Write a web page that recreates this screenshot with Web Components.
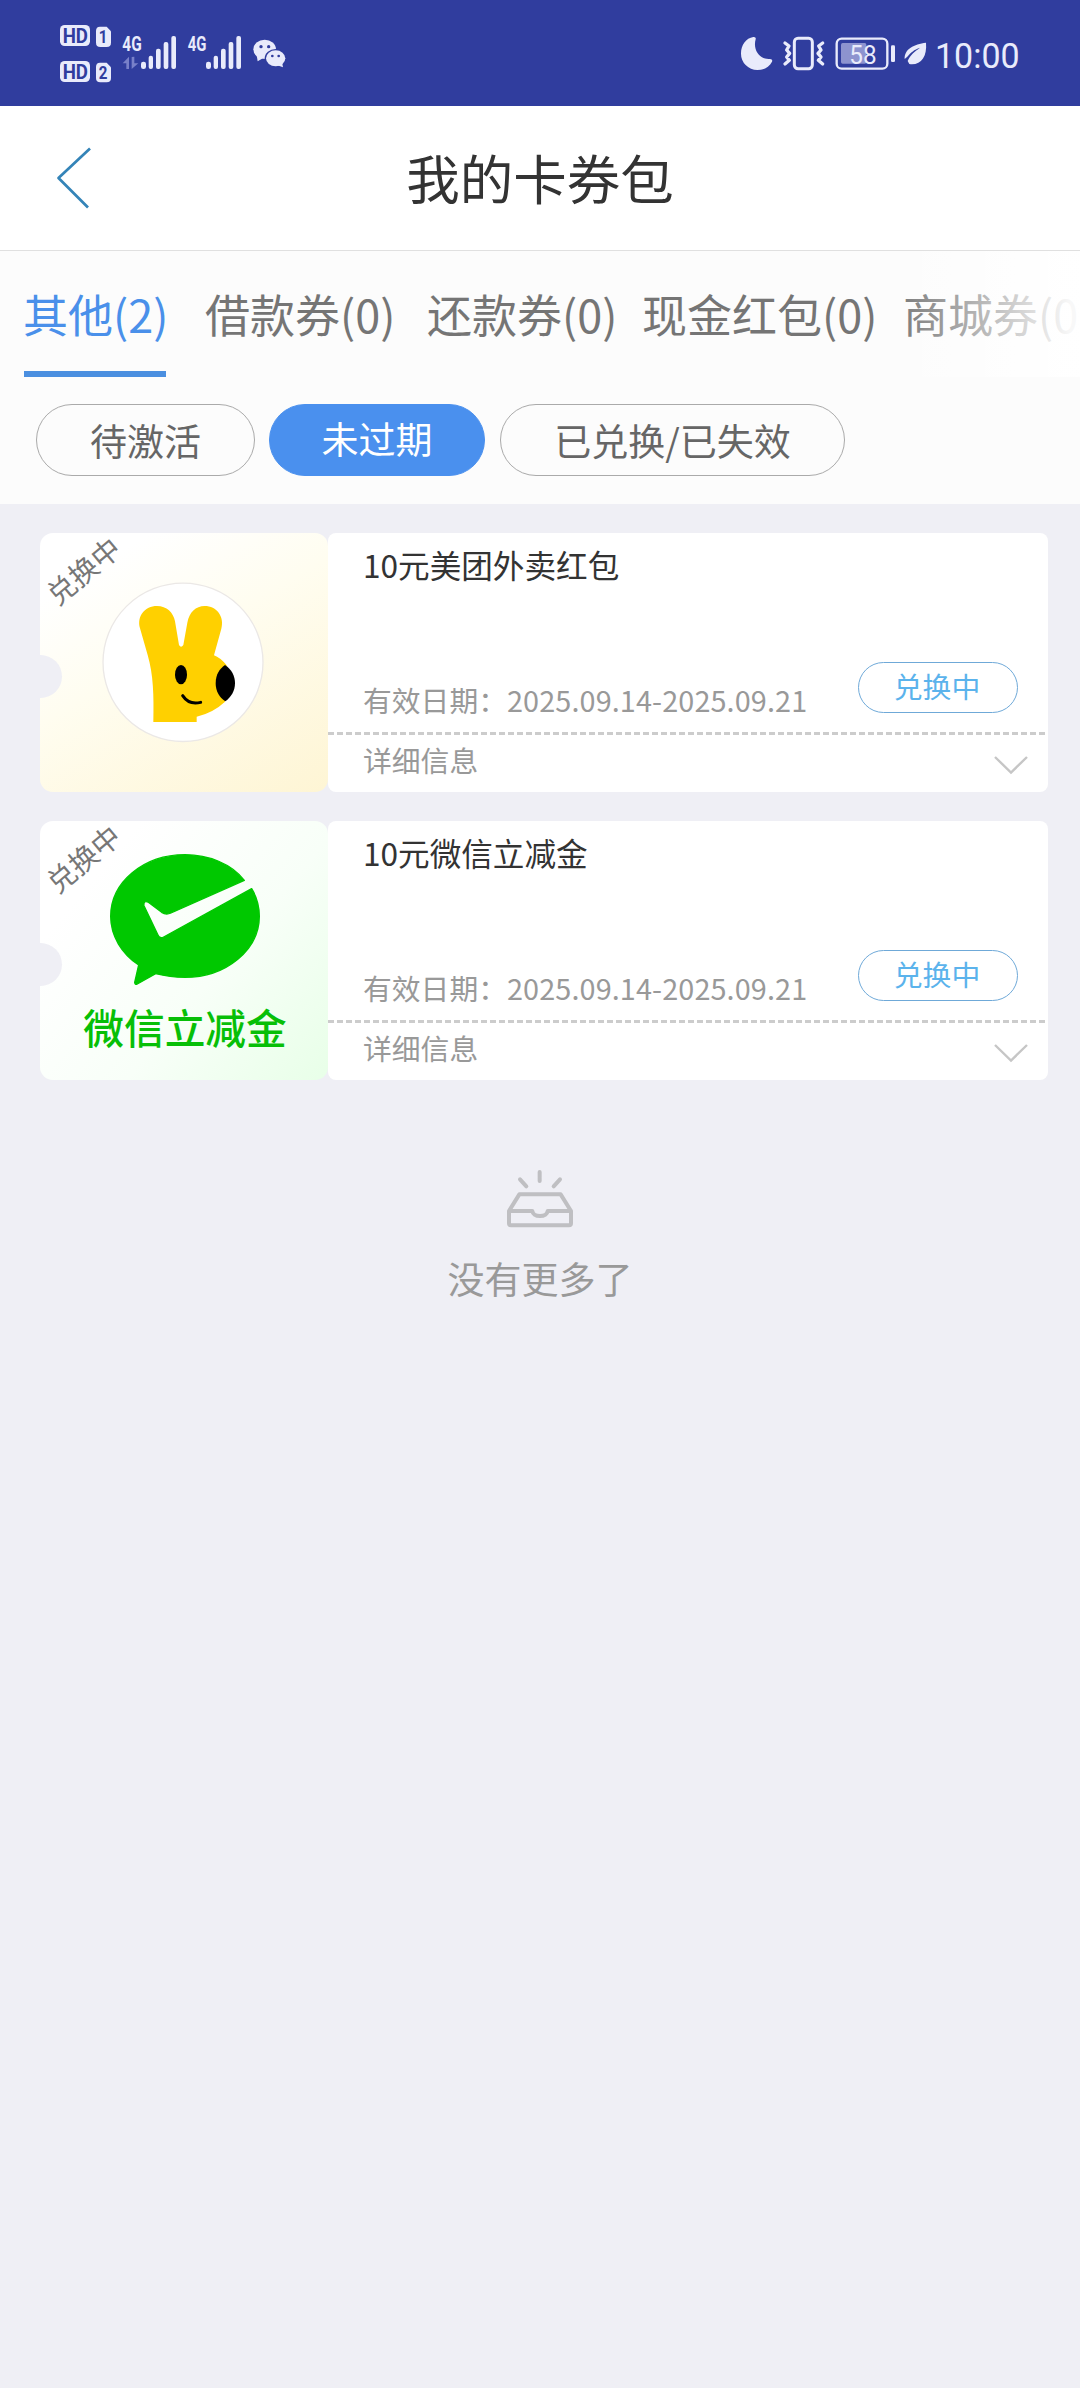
<!DOCTYPE html>
<html lang="zh-CN">
<head>
<meta charset="utf-8">
<title>我的卡券包</title>
<style>
html,body{margin:0;padding:0}
body{width:1080px;height:2388px;background:#efeff5;overflow:hidden;font-family:"Noto Sans CJK SC",sans-serif}
</style>
</head>
<body>
<wallet-page></wallet-page>
<script>
function define(name, html, setup){
  const template = document.createElement('template');
  template.innerHTML = html;
  customElements.define(name, class extends HTMLElement{
    constructor(){
      super();
      this.attachShadow({mode:'open'}).appendChild(template.content.cloneNode(true));
    }
    connectedCallback(){ if(setup) setup(this, this.shadowRoot); }
  });
}

define('status-bar', `
<style>:host{display:block;height:106px;background:#303d9e}svg{display:block}text{font-family:Roboto,sans-serif}</style>
<svg width="1080" height="106" viewBox="0 0 3240 318" fill="#e9ebfb">
  <g transform="translate(120 0)">
    <rect x="60" y="75" width="90" height="63" rx="14"/>
    <path d="M180 80h20l13 14v34q0 13-13 13h-19q-13 0-13-13V93q0-13 12-13z"/>
    <rect x="60" y="183" width="90" height="63" rx="14"/>
    <path d="M180 188h20l13 14v32q0 13-13 13h-19q-13 0-13-13v-33q0-13 12-13z"/>
    <g fill="#303d9e" font-weight="700">
      <text x="68" y="128" font-size="60" textLength="76" lengthAdjust="spacingAndGlyphs">HD</text>
      <text x="68" y="236" font-size="60" textLength="76" lengthAdjust="spacingAndGlyphs">HD</text>
      <text x="176" y="130" font-size="54" textLength="26" lengthAdjust="spacingAndGlyphs">1</text>
      <text x="176" y="238" font-size="54" textLength="26" lengthAdjust="spacingAndGlyphs">2</text>
    </g>
    <g font-weight="700" font-size="61">
      <text x="247" y="152" textLength="58" lengthAdjust="spacingAndGlyphs">4G</text>
      <text x="443" y="152" textLength="56" lengthAdjust="spacingAndGlyphs">4G</text>
    </g>
    <path fill="#7880c9" d="M248 190l19-20v37h-8v-17zM275 207v-36l8-1v20h12z"/>
    <g>
      <rect x="303" y="185" width="15" height="22" rx="7"/><rect x="326" y="167" width="13" height="40" rx="6"/><rect x="348" y="146" width="14" height="61" rx="6"/><rect x="371" y="126" width="14" height="81" rx="6"/><rect x="394" y="108" width="14" height="99" rx="6"/>
    </g>
    <g transform="translate(195 0)">
      <rect x="303" y="185" width="15" height="22" rx="7"/><rect x="326" y="167" width="13" height="40" rx="6"/><rect x="348" y="146" width="14" height="61" rx="6"/><rect x="371" y="126" width="14" height="81" rx="6"/><rect x="394" y="108" width="14" height="99" rx="6"/>
    </g>
    <ellipse cx="674" cy="148" rx="34" ry="29"/><path d="M650 166l3 18 17-10z"/>
    <ellipse cx="707" cy="175" rx="33" ry="28" fill="#303d9e"/>
    <ellipse cx="707" cy="175" rx="29" ry="24"/><path d="M712 196l17 6-3-16z"/>
    <g fill="#303d9e"><circle cx="663" cy="140" r="5"/><circle cx="686" cy="140" r="5"/><circle cx="697" cy="168" r="4"/><circle cx="716" cy="168" r="4"/></g>
  </g>
  <g transform="translate(2160 0)">
    <path d="M100 111q9-1 7 7c-9 31 11 62 43 59q9 0 6 8c-8 17-25 25-44 25a49 49 0 0 1-49-50c0-25 15-46 37-49z"/>
    <rect x="223" y="115" width="54" height="91" rx="11" fill="none" stroke="#e9ebfb" stroke-width="9"/>
    <path d="M195 129l12 9-7 12 9 10-9 11 8 10-13 11M308 129l-12 9 7 12-9 10 9 11-8 10 13 11" fill="none" stroke="#e9ebfb" stroke-width="10" stroke-linejoin="round" stroke-linecap="round"/>
    <rect x="350" y="116" width="152" height="90" rx="15" fill="none" stroke="#e9ebfb" stroke-width="7"/>
    <rect x="363" y="129" width="76" height="62" rx="5" fill="#8d93cf"/>
    <rect x="513" y="136" width="12" height="50" rx="4"/>
    <text x="388" y="192" font-size="80" textLength="82" lengthAdjust="spacingAndGlyphs">58</text>
    <path d="M618 128c-36 5-65 18-64 49l8-7c11-13 20-21 38-27-15 11-30 22-37 40l5 9c33 5 54-20 50-64z"/>
    <text x="645" y="203" font-size="107" textLength="254" lengthAdjust="spacingAndGlyphs">10:00</text>
  </g>
</svg>`);

define('nav-header', `
<style>
:host{display:grid;grid-template-columns:140px 1fr 140px;height:144px;background:#fff;border-bottom:1px solid #e0e0e0}
h1{margin:0;text-align:center;font-size:53.5px;font-weight:400;line-height:142px;color:#333}
</style>
<svg width="140" height="144" fill="none" stroke="#3484b8" stroke-width="2.7" stroke-linejoin="round"><path d="M90 42.5L58.5 72 88 101.5"/></svg>
<h1><slot></slot></h1>`);

define('tab-item', `
<style>
:host{display:block;flex:none;box-sizing:border-box;height:126px;font-size:45px;line-height:125px;color:#757575;white-space:nowrap;border-bottom:6px solid transparent}
:host([active]){color:#4a90ea;border-bottom-color:#4b8fe0}
.text{margin-left:-1px}
</style><span class="text"><slot></slot><span class="n"></span></span>`, (el, root) => {
  root.querySelector('.n').textContent = '(' + el.getAttribute('count') + ')';
});

define('tab-bar', `
<style>
:host{display:flex;position:relative;height:126px;overflow:hidden}
.fade{position:absolute;right:0;top:0;width:190px;height:126px;background:linear-gradient(90deg,rgba(255,255,255,0),rgba(255,255,255,.95) 95%)}
</style><slot></slot><div class="fade"></div>`);

define('filter-chip', `
<style>
:host{display:block;box-sizing:border-box;height:72px;border:1px solid #aaa;border-radius:36px;font-size:37px;line-height:70px;text-align:center;color:#666;white-space:nowrap}
:host([active]){background:#4a90ee;border-color:#4a90ee;color:#fff;line-height:66px}
</style><slot></slot>`);

define('coupon-card', `
<style>
:host{display:flex;height:259px}
.art{position:relative;width:288px;height:259px;border-radius:13px;background:var(--art)}
.notch{position:absolute;left:0;top:122px;width:22px;height:43px;border-radius:0 22px 22px 0;background:#efeff5}
.state{position:absolute;left:0;top:18px;width:86px;line-height:38px;font-size:28.5px;color:#777;transform:rotate(-40deg);white-space:nowrap}
.info{display:flex;flex-direction:column;width:720px;background:#fff;border-radius:8px;overflow:hidden}
.main{display:flex;justify-content:space-between;height:199px;box-sizing:border-box;padding:0 30px 0 35px}
.copy{display:flex;flex-direction:column;justify-content:space-between}
h2{margin:9px 0 0;font-size:31.6px;line-height:44px;font-weight:400;color:#333}
.date{margin-bottom:11px;font-size:28.8px;line-height:42px;color:#999;white-space:nowrap}
.date span{letter-spacing:.12px}
button{align-self:flex-end;box-sizing:border-box;width:160px;height:51px;margin:0 0 19px;padding:0 2px 3px 0;border:1px solid #6fa9d8;border-radius:26px;background:none;font:28.8px/44px "Noto Sans CJK SC",sans-serif;color:#5bb3ec}
.line{height:3px;background:repeating-linear-gradient(90deg,#ccc 0 6px,transparent 6px 9px)}
.more{display:flex;justify-content:space-between;padding:0 20px 0 35px;height:57px;font-size:28.8px;line-height:50px;color:#999}
.more svg{margin-top:19px}
</style>
<div class="art"><slot name="art"></slot><div class="notch"></div><div class="state">兑换中</div></div>
<div class="info">
  <div class="main"><div class="copy"><h2><slot></slot></h2><div class="date">有效日期：<span></span></div></div><button>兑换中</button></div>
  <div class="line"></div>
  <div class="more"><span>详细信息</span><svg width="34" height="22" fill="none" stroke="#c6c6c6" stroke-width="2.4"><path d="M1 3l16 15.500L33 3"/></svg></div>
</div>`, (el, root) => {
  root.querySelector('.date span').textContent = el.getAttribute('dates');
});

define('kangaroo-art', `
<style>:host{display:block}svg{display:block}</style>
<svg width="288" height="259" viewBox="30 39 864 777">
  <ellipse cx="459" cy="427" rx="240" ry="237.500" fill="#fff" stroke="#ebe8e6" stroke-width="4"/>
  <path fill="#ffd000" d="M370 606C372 525 370 465 353 405L330 325C320 289 344 258 381 258C410 258 430 277 435 304L447 375Q453 386 460 375L472 308C478 277 497 258 524 258C560 258 584 290 574 326L552 406Q570 412 590 436L585 545Q550 578 500 590V606Z"/>
  <path d="M585 435C605 449 615 467 615 490C615 513 603 532 586 544C568 532 557 514 557 489C557 464 569 446 585 435Z"/>
  <ellipse cx="453" cy="464" rx="18" ry="29"/>
  <path d="M458 527Q477 556 512 547" fill="none" stroke="#000" stroke-width="9" stroke-linecap="round"/>
</svg>`);

define('wechat-art', `
<style>
:host{display:flex;flex-direction:column;align-items:center;height:259px}
svg{display:block}
p{margin:0 0 0 2px;font-size:40.7px;line-height:59px;font-weight:500;color:#07bf07}
</style>
<svg width="288" height="176" viewBox="30 32 864 528">
  <path fill="#00c800" stroke="#00c800" stroke-width="4" stroke-linejoin="round" d="M643 210C605 160 535 133 465 133C340 133 242 216 242 318C242 377 275 430 326 464L314 516Q315 525 322 521L377 490Q420 501 465 501C588 501 688 419 688 318Q688 272 665 235L401 380Q390 386 384 374L342 286Q340 270 354 275L395 306Q408 315 423 308Z"/>
</svg>
<p>微信立减金</p>`);

define('empty-state', `
<style>
:host{display:flex;flex-direction:column;align-items:center;font-size:37px;line-height:54px;color:#999}
svg{display:block;margin-bottom:19px}
</style>
<svg width="70" height="64" viewBox="225 55 210 192" fill="none" stroke="#bfbfc2" stroke-width="12" stroke-linecap="round" stroke-linejoin="round">
  <path d="M329 67v27M270 89l19 21M390 89l-19 21"/>
  <path d="M237 184L268 134H392L423 184V221Q423 227 417 227H243Q237 227 237 221ZM237 184H307C308 192 316 199 330 199C344 199 352 192 353 184H423"/>
</svg><slot></slot>`);

define('wallet-page', `
<style>
:host{display:flex;flex-direction:column;width:1080px;height:2388px}
.panel{background:#fcfcfc;height:253px}
tab-item:nth-child(1){margin-left:24px;width:142px;margin-right:40px}
tab-item:nth-child(2){width:187px;margin-right:35px}
tab-item:nth-child(3){width:187px;margin-right:28px}
tab-item:nth-child(4){width:232px;margin-right:29px}
.chips{display:flex;padding:27px 0 0 36px}
.chips :nth-child(1){width:219px;margin-right:14px}
.chips :nth-child(2){width:216px;margin-right:15px}
.chips :nth-child(3){width:345px}
.list{display:flex;flex-direction:column;gap:29px;padding:29px 32px 0 40px}
.y{--art:linear-gradient(150deg,#fff 15%,#fffdf0 45%,#fef5d4 100%)}
.g{--art:linear-gradient(130deg,#fff 20%,#f8fff8 60%,#e8ffe8 100%)}
empty-state{margin-top:88px}
</style>
<status-bar></status-bar>
<nav-header>我的卡券包</nav-header>
<div class="panel">
  <tab-bar>
    <tab-item active count="2">其他</tab-item><tab-item count="0">借款券</tab-item><tab-item count="0">还款券</tab-item><tab-item count="0">现金红包</tab-item><tab-item count="0">商城券</tab-item>
  </tab-bar>
  <div class="chips"><filter-chip>待激活</filter-chip><filter-chip active>未过期</filter-chip><filter-chip>已兑换/已失效</filter-chip></div>
</div>
<div class="list">
  <coupon-card class="y" dates="2025.09.14-2025.09.21"><kangaroo-art slot="art"></kangaroo-art>10元美团外卖红包</coupon-card>
  <coupon-card class="g" dates="2025.09.14-2025.09.21"><wechat-art slot="art"></wechat-art>10元微信立减金</coupon-card>
</div>
<empty-state>没有更多了</empty-state>`);
</script>
</body>
</html>
